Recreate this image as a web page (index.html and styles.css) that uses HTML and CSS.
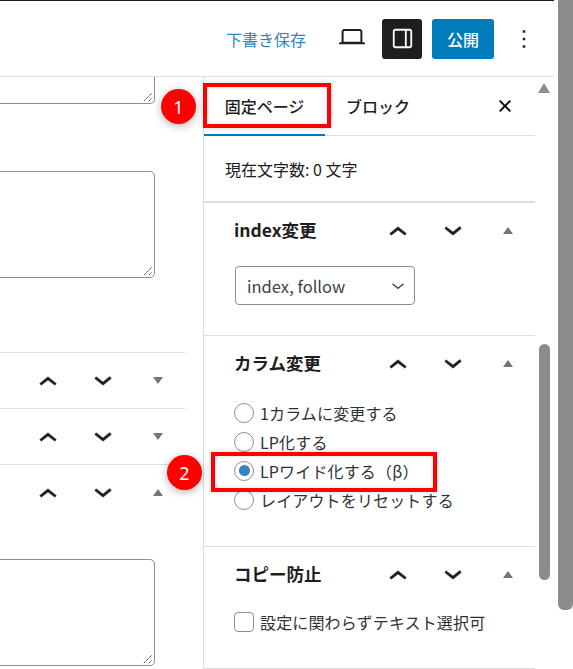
FILE: index.html
```html
<!DOCTYPE html>
<html lang="ja">
<head>
<meta charset="utf-8">
<title>固定ページの編集</title>
<link rel="stylesheet" href="styles.css">
</head>
<body>
<svg class="sprite" aria-hidden="true">
  <symbol id="up" viewBox="0 -1.2 24 24"><path d="M6.5 12.4L12 8l5.5 4.4-.9 1.2L12 10.2l-4.5 3.4-1-1.2z" stroke="#1e1e1e" stroke-width=".3"/></symbol>
  <symbol id="down" viewBox="0 1.2 24 24"><path d="M17.5 11.6L12 16l-5.5-4.4.9-1.2L12 13.8l4.5-3.6 1 1.4z" stroke="#1e1e1e" stroke-width=".3"/></symbol>
  <symbol id="grip" viewBox="0 0 12 12"><path d="M1 11L11 1M7 11l4-4" fill="none" stroke="#555" stroke-width="1.2" stroke-dasharray="2 .6"/></symbol>
</svg>
<div class="app">
  <header class="topbar">
    <a class="draft">下書き保存</a>
    <button class="icon-btn view"><svg width="32" height="32" viewBox="0 0 24 24"><path d="M20.5 16h-.7V8c0-1.1-.9-2-2-2H6.2c-1.1 0-2 .9-2 2v8h-.7c-.8 0-1.5.7-1.5 1.5h20c0-.8-.7-1.5-1.5-1.5zM5.7 8c0-.3.2-.5.5-.5h11.6c.3 0 .5.2.5.5v7.6H5.7V8z"/></svg></button>
    <button class="icon-btn settings"><svg width="29" height="29" viewBox="0 0 24 24"><path d="M18 4H6c-1.1 0-2 .9-2 2v12c0 1.1.9 2 2 2h12c1.1 0 2-.9 2-2V6c0-1.1-.9-2-2-2zm-4 14.5H6c-.3 0-.5-.2-.5-.5V6c0-.3.2-.5.5-.5h8v13zm4.5-.5c0 .3-.2.5-.5.5h-2.5v-13H18c.3 0 .5.2.5.5v12z"/></svg></button>
    <button class="publish">公開</button>
    <button class="icon-btn more"><svg width="30" height="30" viewBox="0 0 24 24"><path d="M13 19h-2v-2h2v2zm0-6h-2v-2h2v2zm0-6h-2V5h2v2z"/></svg></button>
  </header>
  <div class="workspace">
    <main class="editor">
      <div class="field field-cut"><svg class="grip"><use href="#grip"/></svg></div>
      <div class="field field-second"><svg class="grip"><use href="#grip"/></svg></div>
      <div class="box-row first">
        <div class="actions">
          <button class="act"><svg><use href="#up"/></svg></button>
          <button class="act"><svg><use href="#down"/></svg></button>
          <button class="act"><span class="tri tri-down"></span></button>
        </div>
      </div>
      <div class="box-row">
        <div class="actions">
          <button class="act"><svg><use href="#up"/></svg></button>
          <button class="act"><svg><use href="#down"/></svg></button>
          <button class="act"><span class="tri tri-down"></span></button>
        </div>
      </div>
      <div class="box-row">
        <div class="actions">
          <button class="act"><svg><use href="#up"/></svg></button>
          <button class="act"><svg><use href="#down"/></svg></button>
          <button class="act"><span class="tri tri-up"></span></button>
        </div>
      </div>
      <div class="field field-third"><svg class="grip"><use href="#grip"/></svg></div>
    </main>
    <aside class="sidebar">
      <div class="tabs">
        <button class="tab active">固定ページ</button>
        <button class="tab">ブロック</button>
        <button class="close"><svg width="30" height="30" viewBox="0 0 24 24"><path d="M12 13.06l3.712 3.713 1.061-1.06L13.061 12l3.712-3.712-1.06-1.06L12 10.938 8.288 7.227l-1.061 1.06L10.939 12l-3.712 3.712 1.06 1.061L12 13.061z"/></svg></button>
      </div>
      <div class="count">現在文字数: 0 文字</div>
      <section class="panel panel-index">
        <div class="panel-head">
          <h2>index変更</h2>
          <div class="actions">
            <button class="act"><svg><use href="#up"/></svg></button>
            <button class="act"><svg><use href="#down"/></svg></button>
            <button class="act"><span class="tri tri-up"></span></button>
          </div>
        </div>
        <div class="select">
          <span>index, follow</span>
          <svg width="26" height="26" viewBox="0 0 24 24"><path d="M17.5 10.6L12 15l-5.5-4.4.9-1.1 4.6 3.6 4.6-3.6.9 1.1z" fill="#50575e"/></svg>
        </div>
      </section>
      <section class="panel panel-column">
        <div class="panel-head">
          <h2>カラム変更</h2>
          <div class="actions">
            <button class="act"><svg><use href="#up"/></svg></button>
            <button class="act"><svg><use href="#down"/></svg></button>
            <button class="act"><span class="tri tri-up"></span></button>
          </div>
        </div>
        <ul class="options">
          <li><span class="radio"></span>1カラムに変更する</li>
          <li><span class="radio"></span>LP化する</li>
          <li><span class="radio checked"></span>LPワイド化する（β）</li>
          <li><span class="radio"></span>レイアウトをリセットする</li>
        </ul>
      </section>
      <section class="panel panel-copy">
        <div class="panel-head">
          <h2>コピー防止</h2>
          <div class="actions">
            <button class="act"><svg><use href="#up"/></svg></button>
            <button class="act"><svg><use href="#down"/></svg></button>
            <button class="act"><span class="tri tri-up"></span></button>
          </div>
        </div>
        <div class="check-row"><span class="check"></span>設定に関わらずテキスト選択可</div>
      </section>
    </aside>
  </div>
</div>
<span class="scroll-arrow"></span>
<span class="thumb-inner"></span>
<span class="thumb-outer"></span>
<span class="highlight highlight-tab"></span>
<span class="highlight highlight-option"></span>
<span class="badge badge-one">1</span>
<span class="badge badge-two">2</span>
</body>
</html>
```
FILE: styles.css
```css
* { box-sizing: border-box; }
html, body { margin: 0; height: 100%; }
body {
  position: relative;
  overflow: hidden;
  background: #fff;
  color: #1e1e1e;
  font-family: "Noto Sans CJK JP", "Noto Sans", sans-serif;
  font-size: 16px;
}
button {
  font: inherit;
  color: inherit;
  background: none;
  border: 0;
  padding: 0;
  display: flex;
  align-items: center;
  justify-content: center;
}
.sprite { display: none; }

.app { width: 554px; height: 669px; display: flex; flex-direction: column; }

.topbar {
  height: 77px;
  flex: none;
  display: flex;
  align-items: center;
  border-top: 1px solid #1e1e1e;
  border-bottom: 1px solid #ddd;
  padding-left: 226px;
}
.draft { width: 80px; color: #2b87bd; line-height: 1; margin-right: 26px; }
.icon-btn svg { fill: #1e1e1e; display: block; }
.view { width: 40px; height: 40px; margin-right: 10px; margin-top: -3px; }
.settings { width: 40px; height: 40px; background: #1e1e1e; border-radius: 3px; margin-right: 10px; }
.settings svg { fill: #fff; }
.publish { width: 62px; height: 40px; background: #007cba; color: #fff; border-radius: 3px; font-size: 16px; font-weight: 500; margin-right: 12px; }
.more { width: 36px; height: 40px; }

.workspace { flex: 1; display: flex; min-height: 0; }

.editor { width: 203px; flex: none; overflow: hidden; }
.field {
  position: relative;
  margin-left: -10px;
  width: 165px;
  border: 1px solid #8c8f94;
  border-radius: 5px;
  background: #fff;
}
.field-cut { height: 27px; border-top: 0; border-top-left-radius: 0; border-top-right-radius: 0; }
.field-second { height: 107px; margin-top: 67px; }
.field-third { height: 107px; margin-top: 39px; }
.grip { position: absolute; right: 1px; bottom: 1px; width: 10px; height: 10px; }

.box-row { width: 185px; height: 56px; border-top: 1px solid #ddd; }
.box-row .actions { justify-content: flex-end; }
.box-row.first { margin-top: 74px; }

.actions { display: flex; height: 55px; flex: none; }
.act { width: 55px; height: 55px; }
.act svg { width: 36px; height: 36px; fill: #1e1e1e; display: block; }
.tri { width: 0; height: 0; border-left: 5.5px solid transparent; border-right: 5.5px solid transparent; }
.tri-up { border-bottom: 7px solid #757575; }
.tri-down { border-top: 7px solid #757575; }

.sidebar { width: 332px; flex: none; border-left: 1px solid #ddd; }

.tabs { display: flex; height: 59px; border-bottom: 1px solid #ddd; position: relative; }
.tab { height: 59px; padding: 0 21px 1px; font-weight: 500; line-height: 1; white-space: nowrap; }
.tab.active { width: 121px; flex: none; box-shadow: inset 0 -2px 0 #007cba; }
.close { position: absolute; right: 15px; top: 14px; width: 30px; height: 30px; }
.close svg { display: block; }

.count { height: 67px; padding: 0 21px; display: flex; align-items: center; border-bottom: 2px solid #ddd; }

.panel { border-bottom: 1px solid #ddd; }
.panel-head { display: flex; align-items: center; justify-content: space-between; height: 55px; padding-left: 30px; }
.panel-head h2 { margin: -2px 0 0; font-size: 17.5px; line-height: 1; font-weight: 700; }

.panel-index { height: 133px; }
.panel-column { height: 211px; }
.panel-copy { height: 122px; }
.panel-index .panel-head { margin-bottom: 8px; }

.select {
  margin-left: 31px;
  width: 180px;
  height: 39px;
  border: 1px solid #8c8f94;
  border-radius: 4px;
  display: flex;
  align-items: center;
  justify-content: space-between;
  padding: 0 3px 0 11px;
  color: #3c434a;
  font-size: 16.5px;
}

.options { list-style: none; margin: 7px 0 0; padding: 0 0 0 30px; }
.options li { height: 29.2px; display: flex; align-items: center; gap: 6px; color: #2c3338; line-height: 1; letter-spacing: .15px; }
.radio { width: 20px; height: 20px; flex: none; border: 1px solid #8c8f94; border-radius: 50%; display: flex; align-items: center; justify-content: center; }
.radio.checked::after { content: ""; width: 11px; height: 11px; border-radius: 50%; background: #3582c4; }

.check-row { margin: 10px 0 0 30px; display: flex; align-items: center; gap: 6px; height: 20px; color: #2c3338; line-height: 1; letter-spacing: .15px; }
.check { width: 20px; height: 20px; flex: none; border: 1px solid #8c8f94; border-radius: 4px; }

.scroll-arrow { position: absolute; left: 538px; top: 83px; width: 0; height: 0; border-left: 6.5px solid transparent; border-right: 6.5px solid transparent; border-bottom: 10px solid #8c8c8c; }
.thumb-inner { position: absolute; left: 539px; top: 344px; width: 11px; height: 236px; background: #8c8c8c; border-radius: 6px; }
.thumb-outer { position: absolute; left: 558px; top: 0; width: 15px; height: 610px; background: #8c8c8c; border-radius: 0 0 6px 6px; }

.highlight { position: absolute; border: 4px solid #f00; box-shadow: 0 0 5px rgba(0,0,0,.18), inset 0 0 5px rgba(0,0,0,.12); }
.highlight-tab { left: 203px; top: 83px; width: 128px; height: 45px; }
.highlight-option { left: 211px; top: 452px; width: 226px; height: 40px; }

.badge { position: absolute; width: 35px; height: 35px; border-radius: 50%; background: #f00; color: #fff; display: flex; align-items: center; justify-content: center; font-family: "Noto Sans", sans-serif; font-size: 18px; line-height: 1; box-shadow: 0 2px 8px rgba(0,0,0,.3); }
.badge-one { left: 161px; top: 89px; }
.badge-two { left: 167px; top: 455px; }
```
